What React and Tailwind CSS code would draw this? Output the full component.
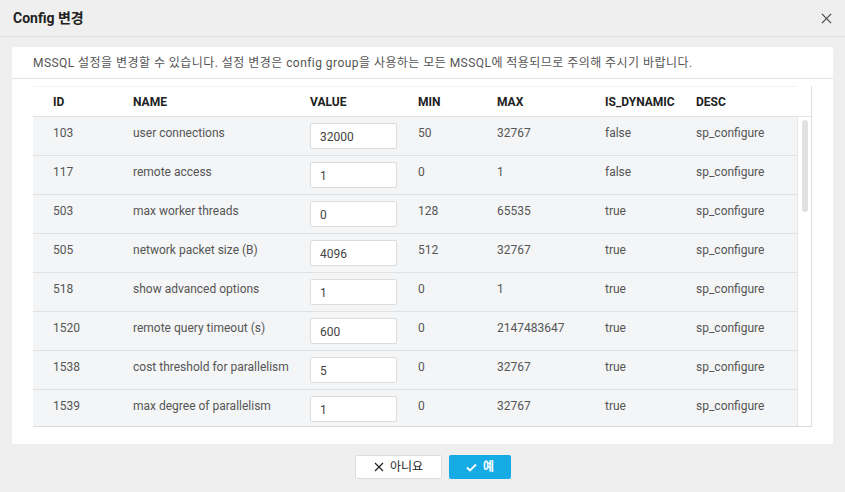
import React from 'react';

const rows = [
  { id: '103', name: 'user connections', value: '32000', min: '50', max: '32767', dyn: 'false' },
  { id: '117', name: 'remote access', value: '1', min: '0', max: '1', dyn: 'false' },
  { id: '503', name: 'max worker threads', value: '0', min: '128', max: '65535', dyn: 'true' },
  { id: '505', name: 'network packet size (B)', value: '4096', min: '512', max: '32767', dyn: 'true' },
  { id: '518', name: 'show advanced options', value: '1', min: '0', max: '1', dyn: 'true' },
  { id: '1520', name: 'remote query timeout (s)', value: '600', min: '0', max: '2147483647', dyn: 'true' },
  { id: '1538', name: 'cost threshold for parallelism', value: '5', min: '0', max: '32767', dyn: 'true' },
  { id: '1539', name: 'max degree of parallelism', value: '1', min: '0', max: '32767', dyn: 'true' },
];

const cols = 'grid grid-cols-[80px_177px_108px_79px_108px_91px_121px]';

const App = () => {
  return (
    <div className="w-[845px] h-[492px] bg-[#efefef] flex flex-col text-[#555] font-['Roboto','Noto_Sans_CJK_KR',sans-serif]">
      {/* header */}
      <div className="h-[37px] shrink-0 flex items-center justify-between pl-[13px] pr-[13px] border-b border-[#dedede]">
        <h2 className="text-[14px] font-bold text-[#222]">Config 변경</h2>
        <svg className="w-[11px] h-[11px] text-[#444]" viewBox="0 0 12 12" fill="none" stroke="currentColor" strokeWidth="1.3">
          <path d="M1 1l10 10M11 1L1 11" />
        </svg>
      </div>

      {/* card */}
      <div className="mx-[12px] mt-[10px] bg-white rounded-[3px] pb-[17px]">
        <div className="h-[32px] flex items-center pl-[21px] text-[12px] tracking-[0.45px] border-b border-[#e4e4e4]">
          MSSQL 설정을 변경할 수 있습니다. 설정 변경은 config group을 사용하는 모든 MSSQL에 적용되므로 주의해 주시기 바랍니다.
        </div>

        <div className="ml-[21px] mt-[7px] w-[779px] border-r border-b border-[#dcdcdc] text-[12px]">
          {/* head */}
          <div className="flex h-[30px] bg-white">
            <div className={`${cols} w-[764px] items-center border-t border-[#f3f3f3] font-bold text-[#222]`}>
              <div className="pl-5">ID</div>
              <div className="pl-5">NAME</div>
              <div className="pl-5">VALUE</div>
              <div className="pl-5">MIN</div>
              <div className="pl-5">MAX</div>
              <div className="pl-5">IS_DYNAMIC</div>
              <div className="pl-5">DESC</div>
            </div>
          </div>

          {/* body */}
          <div className="flex h-[310px] overflow-hidden">
            <div className="w-[764px] shrink-0">
              {rows.map(r => (
                <div key={r.id} className={`${cols} h-[39px] bg-[#f4f5f7] border-t border-[#e1e1e1]`}>
                  <div className="pl-5 pt-[7px]">{r.id}</div>
                  <div className="pl-5 pt-[7px]">{r.name}</div>
                  <div className="pl-5 pt-[6px]">
                    <input
                      readOnly
                      value={r.value}
                      className="w-[87px] h-[26px] px-[9px] pt-[2px] bg-white border border-[#dcdcdc] rounded-[2px] text-[12px] text-[#444] outline-none"
                    />
                  </div>
                  <div className="pl-5 pt-[7px]">{r.min}</div>
                  <div className="pl-5 pt-[7px]">{r.max}</div>
                  <div className="pl-5 pt-[7px]">{r.dyn}</div>
                  <div className="pl-5 pt-[7px]">sp_configure</div>
                </div>
              ))}
            </div>
            <div className="w-[15px] shrink-0 bg-white border-l border-t border-[#e6e6e6] pt-[3px] flex justify-center">
              <div className="w-[6px] h-[92px] rounded-full bg-[#e1e1e1]" />
            </div>
          </div>
        </div>
      </div>

      {/* footer */}
      <div className="flex justify-center gap-[7px] pl-[21px] mt-[11px]">
        <button className="w-[87px] h-[24px] flex items-center justify-center gap-[6px] bg-white border border-[#dddddd] rounded-[2px] text-[12px] text-[#222]">
          <svg className="w-[10px] h-[10px]" viewBox="0 0 10 10" fill="none" stroke="currentColor" strokeWidth="1.2">
            <path d="M1 1l8 8M9 1L1 9" />
          </svg>
          아니요
        </button>
        <button className="w-[62px] h-[24px] flex items-center justify-center gap-[6px] bg-[#17abe6] rounded-[2px] text-[12px] font-bold text-white">
          <svg className="w-[11px] h-[9px]" viewBox="0 0 11 9" fill="none" stroke="currentColor" strokeWidth="1.8">
            <path d="M1 4.5l3 3L10 1.5" />
          </svg>
          예
        </button>
      </div>
    </div>
  );
};

export default App;
